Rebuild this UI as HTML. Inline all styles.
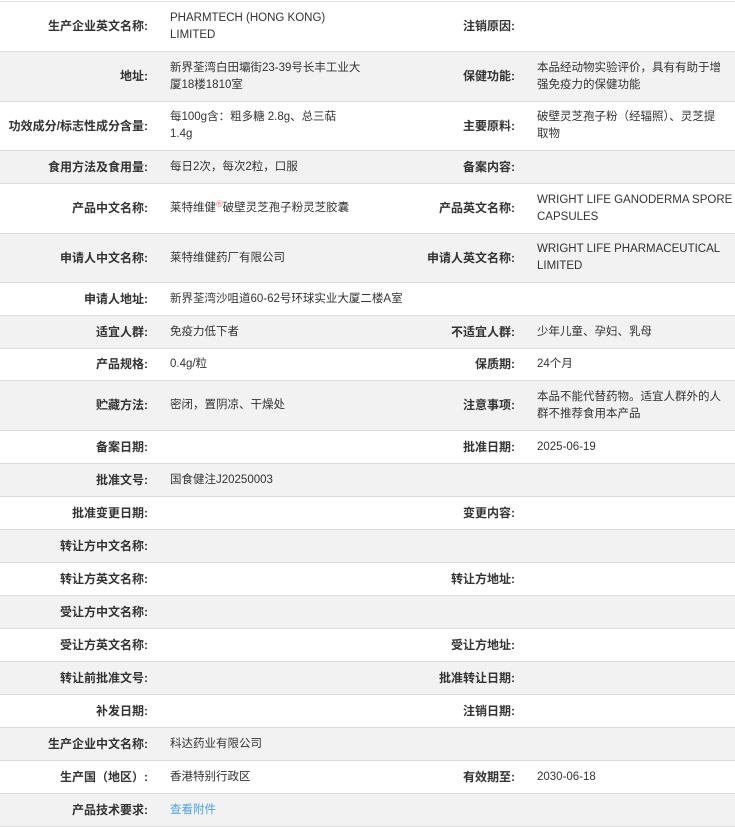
<!DOCTYPE html>
<html><head><meta charset="utf-8"><style>
body{margin:0;background:#fff;font-family:"Liberation Sans","Noto Sans CJK SC",sans-serif;font-size:11.5px;color:#333;}
table{border-collapse:collapse;width:735px;table-layout:fixed;margin-top:1px;border-top:1px solid #ddd;}
td{border-bottom:1px solid #ddd;padding:0 12px 0 10px;line-height:17px;vertical-align:middle;word-break:normal;overflow-wrap:normal;}
td.l{text-align:right;font-weight:bold;padding:0 12px 0 0;font-size:12px;}
tr.g td{background:#f2f2f2;}
tr.s{height:33px}
tr.d{height:50px}
sup{color:#e77;font-size:9px;vertical-align:4px;line-height:0;}
a{color:#4aa3f0;text-decoration:none;}
</style></head><body>
<table>
<colgroup><col style="width:160px"><col style="width:208px"><col style="width:159px"><col style="width:208px"></colgroup>
<tr class="d"><td class="l">生产企业英文名称:</td><td>PHARMTECH (HONG KONG) LIMITED</td><td class="l">注销原因:</td><td></td></tr>
<tr class="g d"><td class="l">地址:</td><td style="padding-right:0">新界荃湾白田壩街23-39号长丰工业大厦18楼1810室</td><td class="l">保健功能:</td><td style="padding-right:6px">本品经动物实验评价，具有有助于增强免疫力的保健功能</td></tr>
<tr class="d" style="height:49px"><td class="l">功效成分/标志性成分含量:</td><td>每100g含：粗多糖 2.8g、总三萜 1.4g</td><td class="l">主要原料:</td><td>破壁灵芝孢子粉（经辐照）、灵芝提取物</td></tr>
<tr class="g s"><td class="l">食用方法及食用量:</td><td>每日2次，每次2粒，口服</td><td class="l">备案内容:</td><td></td></tr>
<tr class="d"><td class="l">产品中文名称:</td><td>莱特维健<sup>®</sup>破壁灵芝孢子粉灵芝胶囊</td><td class="l">产品英文名称:</td><td style="padding-right:0">WRIGHT LIFE GANODERMA SPORE CAPSULES</td></tr>
<tr class="g d" style="height:49px"><td class="l">申请人中文名称:</td><td>莱特维健药厂有限公司</td><td class="l">申请人英文名称:</td><td>WRIGHT LIFE PHARMACEUTICAL LIMITED</td></tr>
<tr class="s"><td class="l">申请人地址:</td><td colspan="3">新界荃湾沙咀道60-62号环球实业大厦二楼A室</td></tr>
<tr class="g s"><td class="l">适宜人群:</td><td>免疫力低下者</td><td class="l">不适宜人群:</td><td>少年儿童、孕妇、乳母</td></tr>
<tr class="s" style="height:32px"><td class="l">产品规格:</td><td>0.4g/粒</td><td class="l">保质期:</td><td>24个月</td></tr>
<tr class="g d"><td class="l">贮藏方法:</td><td>密闭，置阴凉、干燥处</td><td class="l">注意事项:</td><td>本品不能代替药物。适宜人群外的人群不推荐食用本产品</td></tr>
<tr class="s"><td class="l">备案日期:</td><td></td><td class="l">批准日期:</td><td>2025-06-19</td></tr>
<tr class="g s"><td class="l">批准文号:</td><td colspan="3">国食健注J20250003</td></tr>
<tr class="s"><td class="l">批准变更日期:</td><td></td><td class="l">变更内容:</td><td></td></tr>
<tr class="g s"><td class="l">转让方中文名称:</td><td colspan="3"></td></tr>
<tr class="s"><td class="l">转让方英文名称:</td><td></td><td class="l">转让方地址:</td><td></td></tr>
<tr class="g s"><td class="l">受让方中文名称:</td><td colspan="3"></td></tr>
<tr class="s"><td class="l">受让方英文名称:</td><td></td><td class="l">受让方地址:</td><td></td></tr>
<tr class="g s"><td class="l">转让前批准文号:</td><td></td><td class="l">批准转让日期:</td><td></td></tr>
<tr class="s"><td class="l">补发日期:</td><td></td><td class="l">注销日期:</td><td></td></tr>
<tr class="g s"><td class="l">生产企业中文名称:</td><td colspan="3">科达药业有限公司</td></tr>
<tr class="s"><td class="l">生产国（地区）:</td><td>香港特别行政区</td><td class="l">有效期至:</td><td>2030-06-18</td></tr>
<tr class="g s"><td class="l">产品技术要求:</td><td colspan="3"><a>查看附件</a></td></tr>
</table>
</body></html>
